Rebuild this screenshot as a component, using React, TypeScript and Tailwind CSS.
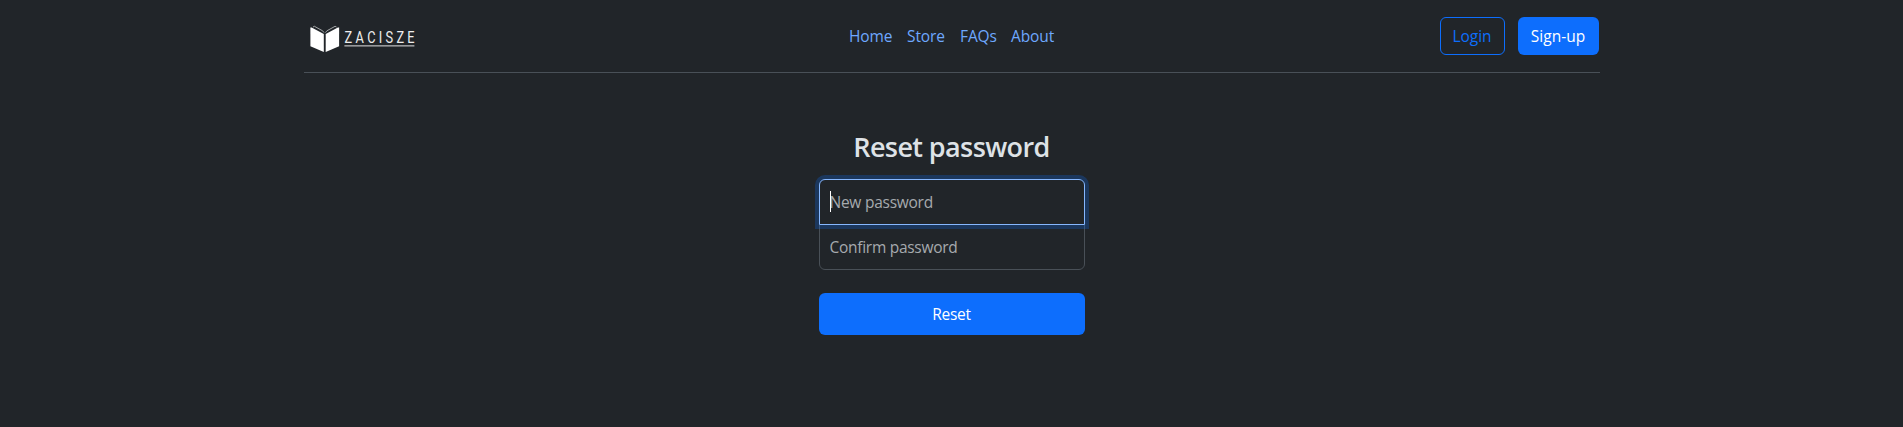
const links = [
  { label: "Home", width: "w-[42px]" },
  { label: "Store", width: "w-[37px]" },
  { label: "FAQs", width: "w-[35px]" },
  { label: "About", width: "w-[44px]" },
];

function Logo() {
  return (
    <svg width="112" height="40" viewBox="0 0 112 40" role="img" aria-label="Zacisze">
      <g fill="#fff">
        <path d="M6.4 9.6 7.6 9.6 19.8 16V34L6.4 28.2Z" />
        <path d="M35.1 9.6 33.9 9.6 21.7 16V34L35.1 28.2Z" />
      </g>
      <g fill="none" stroke="#c3c5c7" strokeWidth="0.8">
        <path d="M9 9 10.4 8.3 18.6 12.8 20 14.6" />
        <path d="M32.5 9 31.1 8.3 22.9 12.8 21.5 14.6" />
      </g>
      <g transform="translate(40.6 25.2) scale(0.8 1)">
        <text
          x="0"
          y="0"
          fill="#eeeeee"
          fontFamily="Roboto, sans-serif"
          fontWeight="400"
          fontSize="16"
          textLength="87.5"
          lengthAdjust="spacing"
        >
          ZACISZE
        </text>
      </g>
      <rect x="40.4" y="27.2" width="70" height="1.3" fill="#b5b6b7" />
    </svg>
  );
}

export default function App() {
  return (
    <div className="min-h-[427px] bg-[#212529] font-['Open_Sans','Noto_Sans',sans-serif] text-[15.5px] leading-6 text-[#dee2e6]">
      <div className="mx-auto w-[1296px]">
        <header className="flex h-[73px] items-start justify-between border-b border-[#495057]">
          <a href="#" className="block w-[545px] pt-[18px]">
            <Logo />
          </a>
          <nav className="flex gap-4 pt-6 pl-px tracking-[-0.1px] text-[#6ea8fe]">
            {links.map((link) => (
              <a key={link.label} href="#" className={`${link.width} whitespace-nowrap`}>
                {link.label}
              </a>
            ))}
          </nav>
          <div className="flex w-[545px] justify-end gap-[13px] pt-[17px] pr-px">
            <button className="h-[38px] w-[65px] rounded-md border border-[#0d6efd] text-[#0d6efd]">
              Login
            </button>
            <button className="h-[38px] w-[81px] rounded-md bg-[#0d6efd] text-white">Sign-up</button>
          </div>
        </header>
        <form className="mx-auto mt-[57px] w-[266px]">
          <h1 className="mb-2 h-[41px] text-center text-[27px] leading-[34px] font-semibold tracking-[-0.6px] whitespace-nowrap">
            Reset password
          </h1>
          <div className="relative z-10">
            <input
              type="password"
              placeholder="New password"
              className="block h-[46px] w-full rounded-t-md border border-[#86b7fe] bg-[#212529] px-2.5 tracking-[-0.25px] shadow-[0_0_0_4px_rgba(13,110,253,0.25)] outline-none placeholder:text-[#a6aaae]"
            />
            <span className="absolute top-3 left-[11px] h-[21px] w-px bg-white" />
          </div>
          <input
            type="password"
            placeholder="Confirm password"
            className="-mt-px block h-[46px] w-full rounded-b-md border border-[#495057] bg-[#212529] px-2.5 tracking-[-0.28px] outline-none placeholder:text-[#a6aaae]"
          />
          <button type="button" className="mt-[23px] h-[42px] w-full rounded-md bg-[#0d6efd] tracking-[-0.3px] text-white">
            Reset
          </button>
        </form>
      </div>
    </div>
  );
}
